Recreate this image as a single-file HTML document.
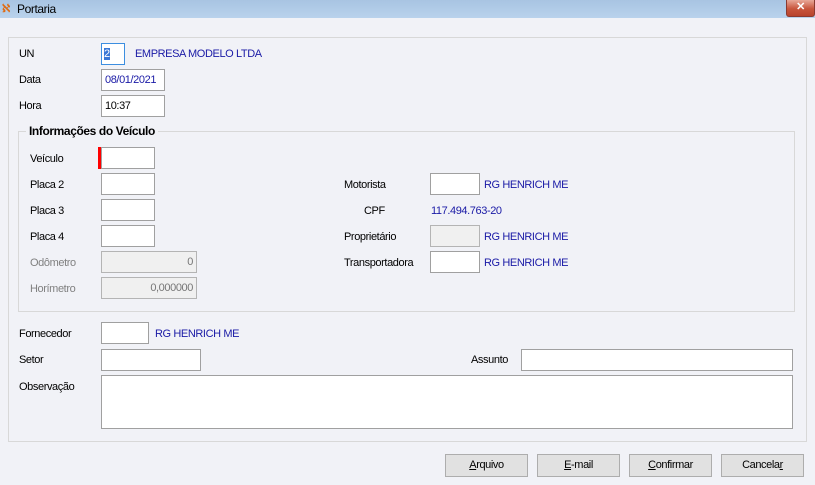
<!DOCTYPE html>
<html><head><meta charset="utf-8"><style>
*{margin:0;padding:0;box-sizing:border-box}
body{width:815px;height:485px;background:#f1f2f7;font-family:"Liberation Sans",Tahoma,sans-serif;font-size:11px;letter-spacing:-0.4px;color:#000;position:relative;overflow:hidden}
.a{position:absolute;white-space:nowrap}
.t{position:absolute;white-space:nowrap;line-height:14px}
.b{color:#1a1aa6}
.g{color:#808080}
.i{position:absolute;background:#fff;border:1px solid #a0a0a0;height:22px;line-height:20px;padding:0 3px;color:#1a1aa6}
.d{background:#f0f0f0;border-color:#b4b4b4;text-align:right;color:#777}
.btn{position:absolute;top:454px;height:23px;width:83px;background:#e1e1e1;border:1px solid #adadad;text-align:center;line-height:21px}
</style></head><body>
<div class="a" style="left:0;top:0;width:815px;height:18px;background:linear-gradient(#a8c4e2,#b9d2ec)"></div>
<div class="a" style="left:2px;top:2px;font-size:11px;color:#e06a10;font-weight:bold">ℵ</div>
<div class="t" style="left:17px;top:2px;font-size:12px">Portaria</div>
<div class="a" style="left:786px;top:0;width:29px;height:17px;background:linear-gradient(#e8a898,#c8553c 55%,#b8432c);border:1px solid #8a3a30;border-top:none;border-radius:0 0 3px 3px;color:#fff;text-align:center;font-weight:bold;font-size:11px;line-height:15px">✕</div>
<div class="a" style="left:8px;top:37px;width:799px;height:405px;border:1px solid #d8d8d8"></div>
<div class="a" style="left:18px;top:131px;width:777px;height:181px;border:1px solid #d8d8d8"></div>
<div class="t" style="left:26px;top:124px;background:#f1f2f7;padding:0 3px;font-weight:bold;font-size:12px">Informações do Veículo</div>

<div class="t" style="left:19px;top:47px">UN</div>
<div class="i" style="left:101px;top:43px;width:24px;border-color:#3c8ee0;padding:0 2px"><span style="background:#3a78d6;color:#fff">2</span></div>
<div class="t b" style="left:135px;top:47px">EMPRESA MODELO LTDA</div>
<div class="t" style="left:19px;top:73px">Data</div>
<div class="i" style="left:101px;top:69px;width:64px">08/01/2021</div>
<div class="t" style="left:19px;top:99px">Hora</div>
<div class="i" style="left:101px;top:95px;width:64px;color:#000">10:37</div>

<div class="t" style="left:30px;top:152px">Veículo</div>
<div class="a" style="left:98px;top:147px;width:3px;height:22px;background:#f00"></div>
<div class="i" style="left:101px;top:147px;width:54px"></div>
<div class="t" style="left:30px;top:178px">Placa 2</div>
<div class="i" style="left:101px;top:173px;width:54px"></div>
<div class="t" style="left:30px;top:204px">Placa 3</div>
<div class="i" style="left:101px;top:199px;width:54px"></div>
<div class="t" style="left:30px;top:230px">Placa 4</div>
<div class="i" style="left:101px;top:225px;width:54px"></div>
<div class="t g" style="left:30px;top:256px">Odômetro</div>
<div class="i d" style="left:101px;top:251px;width:96px">0</div>
<div class="t g" style="left:30px;top:282px">Horímetro</div>
<div class="i d" style="left:101px;top:277px;width:96px">0,000000</div>

<div class="t" style="left:344px;top:178px">Motorista</div>
<div class="i" style="left:430px;top:173px;width:50px"></div>
<div class="t b" style="left:484px;top:178px">RG HENRICH ME</div>
<div class="t" style="left:364px;top:204px">CPF</div>
<div class="t b" style="left:431px;top:204px">117.494.763-20</div>
<div class="t" style="left:344px;top:230px">Proprietário</div>
<div class="i d" style="left:430px;top:225px;width:50px"></div>
<div class="t b" style="left:484px;top:230px">RG HENRICH ME</div>
<div class="t" style="left:344px;top:256px">Transportadora</div>
<div class="i" style="left:430px;top:251px;width:50px"></div>
<div class="t b" style="left:484px;top:256px">RG HENRICH ME</div>

<div class="t" style="left:19px;top:327px">Fornecedor</div>
<div class="i" style="left:101px;top:322px;width:48px"></div>
<div class="t b" style="left:155px;top:327px">RG HENRICH ME</div>
<div class="t" style="left:19px;top:353px">Setor</div>
<div class="i" style="left:101px;top:349px;width:100px"></div>
<div class="t" style="left:471px;top:353px">Assunto</div>
<div class="i" style="left:521px;top:349px;width:272px"></div>
<div class="t" style="left:19px;top:380px">Observação</div>
<div class="i" style="left:101px;top:375px;width:692px;height:54px"></div>

<div class="btn" style="left:445px"><u>A</u>rquivo</div>
<div class="btn" style="left:537px"><u>E</u>-mail</div>
<div class="btn" style="left:629px"><u>C</u>onfirmar</div>
<div class="btn" style="left:721px">Cancela<u>r</u></div>
</body></html>
